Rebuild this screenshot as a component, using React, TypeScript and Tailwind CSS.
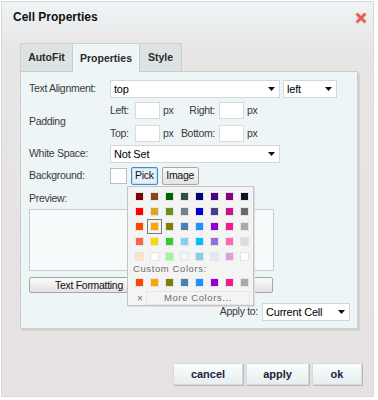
import React from "react";

const grid = [
  ["#800000", "#8b4513", "#006400", "#2f4f4f", "#000080", "#4b0082", "#800080", "#0b1722"],
  ["#ff0000", "#daa520", "#6b8e23", "#708090", "#0000cd", "#483d8b", "#c71585", "#696969"],
  ["#ff4500", "#ffa500", "#808000", "#4682b4", "#1e90ff", "#9400d3", "#ff1493", "#a9a9a9"],
  ["#ff6347", "#ffd700", "#32cd32", "#87cefa", "#00bfff", "#9370db", "#ff69b4", "#dcdcdc"],
  ["#ffe4c4", "#fffff0", "#98fb98", "#eef8f8", "#87ceeb", "#e6e6fa", "#dda0dd", "#ffffff"],
];

const custom = ["#ff4500", "#ffa500", "#808000", "#4682b4", "#1e90ff", "#9400d3", "#ff1493", "#a9a9a9"];

const Select = ({ value, w }: { value: string; w: string }) => (
  <div className={`${w} h-[18px] flex items-center justify-between bg-white border border-[#d3d7d9] pl-[3px] pr-[4px] text-[11px] text-black`}>
    <span className="tracking-[-0.2px]">{value}</span>
    <svg width="7" height="4" viewBox="0 0 7 4">
      <path d="M0 0h7L3.5 4z" fill="#111" />
    </svg>
  </div>
);

const Input = () => <div className="w-[25px] h-[17px] bg-white border border-[#d6dbdd]" />;

const Swatch = ({ c, sel }: { c: string; sel?: boolean }) => (
  <div className={`w-[15px] h-[15px] flex items-center justify-center ${sel ? "border border-[#7a7a7a]" : ""}`}>
    <div className="w-[9px] h-[9px] border border-[#e4e4e4]" style={{ backgroundColor: c }} />
  </div>
);

const DlgButton = ({ label, w }: { label: string; w: string }) => (
  <button className={`${w} h-[22px] bg-gradient-to-b from-[#fbfdfd] to-[#e6eef0] border border-[#d6dadb] shadow-[1px_1px_0_#b8b8b8] text-[11px] font-bold text-[#1b1f3b]`}>
    {label}
  </button>
);

export default function App() {
  return (
    <div className="w-[378px] h-[400px] bg-white pt-[1px] pl-[1px] [font-family:'Liberation_Sans',Arial,sans-serif]">
      <div className="w-[373px] h-[396px] border border-[#d9d9d9] bg-gradient-to-b from-[#eef4f6] via-[#e8e5e5] via-[12%] to-[#e6e2e2] flex flex-col">
        {/* title */}
        <div className="h-[41px] flex justify-between pl-[11px] pr-[4px] pt-[7px]">
          <span className="text-[12px] leading-[16px] font-bold text-[#111]">Cell Properties</span>
          <svg width="12" height="12" viewBox="0 0 12 12" className="mt-[3px] mr-[2px]">
            <path d="M2.5 2.5l7 7M9.5 2.5l-7 7" stroke="#f4b0a6" strokeWidth="4" strokeLinecap="round" />
            <path d="M2.5 2.5l7 7M9.5 2.5l-7 7" stroke="#e45a4a" strokeWidth="2.4" strokeLinecap="round" />
          </svg>
        </div>

        {/* tabs */}
        <div className="ml-[18px] flex h-[28px] text-[10.5px] font-bold text-[#2b2b2b]">
          <div className="w-[53px] bg-[#dde2e3] border border-b-0 border-[#c9cfd1] flex items-center justify-center">AutoFit</div>
          <div className="w-[66px] bg-[#eef5f6] border-t border-[#c9cfd1] flex items-center justify-center relative z-10 h-[29px] pt-[1px]">Properties</div>
          <div className="w-[43px] bg-[#dde2e3] border border-b-0 border-[#c9cfd1] flex items-center justify-center">Style</div>
        </div>

        {/* panel */}
        <div className="ml-[18px] w-[338px] h-[258px] bg-[#eef5f6] border border-[#c9cfd1] shadow-[2px_2px_0_#d6d2d2] relative text-[10.5px] tracking-[-0.3px] text-[#3a3a3a]">
          <div className="pl-[8px] pt-[8px] flex flex-col">
            <div className="flex items-center h-[18px]">
              <span className="w-[81px]">Text Alignment:</span>
              <Select value="top" w="w-[170px]" />
              <div className="ml-[3px]">
                <Select value="left" w="w-[54px]" />
              </div>
            </div>

            <div className="flex items-center mt-[4px]">
              <span className="w-[81px]">Padding</span>
              <div className="flex flex-col gap-[6px]">
                <div className="flex items-center h-[17px]">
                  <span className="w-[25px]">Left:</span>
                  <Input />
                  <span className="ml-[3px] w-[10px]">px</span>
                  <span className="w-[46px] text-right pr-[4px]">Right:</span>
                  <Input />
                  <span className="ml-[3px]">px</span>
                </div>
                <div className="flex items-center h-[17px]">
                  <span className="w-[25px]">Top:</span>
                  <Input />
                  <span className="ml-[3px] w-[10px]">px</span>
                  <span className="w-[46px] text-right pr-[4px]">Bottom:</span>
                  <Input />
                  <span className="ml-[3px]">px</span>
                </div>
              </div>
            </div>

            <div className="flex items-center h-[18px] mt-[3px]">
              <span className="w-[81px]">White Space:</span>
              <Select value="Not Set" w="w-[170px]" />
            </div>

            <div className="flex items-center h-[18px] mt-[4px]">
              <span className="w-[81px]">Background:</span>
              <div className="w-[17px] h-[16px] bg-white border border-[#b9bec1]" />
              <div className="ml-[4px] h-[18px] px-[3px] flex items-center bg-[#e6f1f7] border border-[#3f8fc9] rounded-[2px] shadow-[inset_0_0_0_1px_#bfe0f3] text-[#111]">Pick</div>
              <div className="ml-[4px] h-[18px] w-[37px] flex items-center justify-center bg-gradient-to-b from-[#fafafa] to-[#e3e3e3] border border-[#a8a8a8] rounded-[2px] text-[#111]">Image</div>
            </div>

            <div className="mt-[8px] h-[12px] flex items-center">Preview:</div>
            <div className="mt-[4px] w-[245px] h-[62px] bg-[#f6fafb] border border-[#c8cccf]" />

            <div className="mt-[6px] flex gap-[3px]">
              <button className="w-[120px] h-[16px] bg-gradient-to-b from-[#fbfbfb] to-[#e2e2e2] border border-[#a5a5a5] rounded-[2px] text-[10.5px] text-[#111] leading-none">Text Formatting</button>
              <button className="w-[121px] h-[16px] bg-gradient-to-b from-[#fbfbfb] to-[#e2e2e2] border border-[#a5a5a5] rounded-[2px] text-[10.5px] text-[#111] leading-none">Cell Formatting</button>
            </div>

            <div className="mt-[10px] flex items-center justify-end pr-[7px] h-[18px]">
              <span className="mr-[4px]">Apply to:</span>
              <Select value="Current Cell" w="w-[88px]" />
            </div>
          </div>

          {/* color picker popup */}
          <div className="absolute left-[106px] top-[114px] w-[127px] h-[120px] bg-[#f4f4f4] border border-[#c4c4c4] shadow-[1px_1px_0_#ddd] pl-[4px] pt-[2px] tracking-normal">
            <div className="grid grid-cols-8 w-[120px]">
              {grid.flat().map((c, i) => (
                <Swatch key={i} c={c} sel={i === 17} />
              ))}
            </div>
            <div className="h-[9px] mt-[1px] pl-[1px] flex items-center text-[9.5px] tracking-[0.6px] text-[#6d6d6d]">Custom Colors:</div>
            <div className="grid grid-cols-8 w-[120px] mt-[1px]">
              {custom.map((c, i) => (
                <Swatch key={i} c={c} />
              ))}
            </div>
            <div className="flex items-center h-[16px] text-[9.5px] text-[#6d6d6d]">
              <span className="w-[14px] pl-[5px] text-[10px]">×</span>
              <div className="flex-1 h-[14px] mr-[3px] border border-[#e6e6e6] flex items-center justify-center tracking-[0.6px]">More Colors...</div>
            </div>
          </div>
        </div>

        {/* bottom buttons */}
        <div className="mt-[34px] flex justify-end gap-[3px] pr-[11px]">
          <DlgButton label="cancel" w="w-[70px]" />
          <DlgButton label="apply" w="w-[63px]" />
          <DlgButton label="ok" w="w-[50px]" />
        </div>
      </div>
    </div>
  );
}
